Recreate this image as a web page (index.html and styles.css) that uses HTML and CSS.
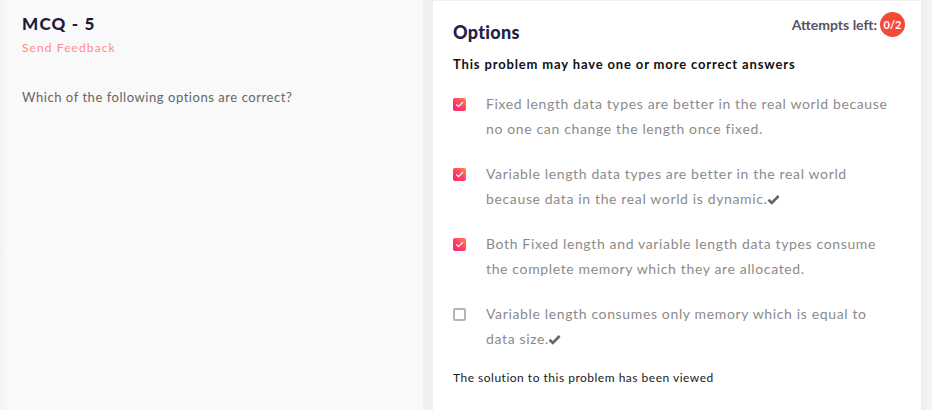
FILE: index.html
```html
<!DOCTYPE html>
<html>
<head>
<meta charset="utf-8">
<link rel="stylesheet" href="styles.css">
</head>
<body>
<div class="page">
  <section class="left">
    <h1 class="title">MCQ - 5</h1>
    <a class="feedback">Send Feedback</a>
    <p class="question">Which of the following options are correct?</p>
  </section>
  <div class="gap"></div>
  <section class="card">
    <div class="card-head">
      <h2 class="options-title">Options</h2>
      <div class="attempts">Attempts left: <span class="badge">0/2</span></div>
    </div>
    <p class="hint">This problem may have one or more correct answers</p>
    <ul class="opts">
      <li class="opt">
        <span class="cb checked"><svg viewBox="0 0 13 13" width="13" height="13"><path d="M3.6 6.8 L5.6 8.6 L9.6 4.4" fill="none" stroke="#fff" stroke-width="1.2" stroke-linecap="round" stroke-linejoin="round"/></svg></span>
        <span class="txt">Fixed length data types are better in the real world because no one can change the length once fixed.</span>
      </li>
      <li class="opt">
        <span class="cb checked"><svg viewBox="0 0 13 13" width="13" height="13"><path d="M3.6 6.8 L5.6 8.6 L9.6 4.4" fill="none" stroke="#fff" stroke-width="1.2" stroke-linecap="round" stroke-linejoin="round"/></svg></span>
        <span class="txt">Variable length data types are better in the real world because data in the real world is dynamic.<svg class="tick" viewBox="0 0 13 11" width="13" height="11"><path d="M1.5 5.8 L4.8 9 L11.6 2" fill="none" stroke="#666" stroke-width="2.6" stroke-linejoin="miter"/></svg></span>
      </li>
      <li class="opt">
        <span class="cb checked"><svg viewBox="0 0 13 13" width="13" height="13"><path d="M3.6 6.8 L5.6 8.6 L9.6 4.4" fill="none" stroke="#fff" stroke-width="1.2" stroke-linecap="round" stroke-linejoin="round"/></svg></span>
        <span class="txt">Both Fixed length and variable length data types consume the complete memory which they are allocated.</span>
      </li>
      <li class="opt">
        <span class="cb"></span>
        <span class="txt">Variable length consumes only memory which is equal to data size.<svg class="tick" viewBox="0 0 13 11" width="13" height="11"><path d="M1.5 5.8 L4.8 9 L11.6 2" fill="none" stroke="#666" stroke-width="2.6" stroke-linejoin="miter"/></svg></span>
      </li>
    </ul>
    <p class="viewed">The solution to this problem has been viewed</p>
  </section>
  <div class="edge"></div>
</div>
</body>
</html>
```
FILE: styles.css
```css
* { box-sizing: border-box; }
html, body { margin: 0; padding: 0; }
body {
  width: 932px;
  height: 410px;
  overflow: hidden;
  font-family: Lato, "Noto Sans", sans-serif;
  background: #efefef;
}
.page {
  display: flex;
  height: 410px;
}
.left {
  width: 423px;
  flex: none;
  background: linear-gradient(to right, #f2f2f2 0px, #f9f9f9 8px, #f9f9f9 100%);
  padding: 14px 22px;
}
.title {
  margin: 0;
  font-size: 17px;
  font-weight: 900;
  letter-spacing: 1.2px;
  color: #1d1b3a;
  line-height: 20px;
}
.feedback {
  display: block;
  margin-top: 7px;
  font-size: 12px;
  color: #ff8a8a;
  letter-spacing: 1.1px;
  line-height: 14px;
}
.question {
  margin: 34px 0 0;
  font-size: 13px;
  color: #666;
  letter-spacing: 0.55px;
  line-height: 16px;
}
.gap {
  width: 10px;
  flex: none;
  background: #efefef;
}
.card {
  width: 488px;
  flex: none;
  margin-top: 1px;
  background: #fff;
  padding: 12px 16px 0 20px;
}
.edge {
  flex: 1;
  background: linear-gradient(to right, #eeeeee, #f6f6f6);
}
.card-head {
  display: flex;
  justify-content: space-between;
  align-items: flex-start;
}
.options-title {
  margin: 8px 0 0;
  font-size: 18px;
  font-weight: 900;
  color: #23214a;
  letter-spacing: 0.3px;
  line-height: 22px;
}
.attempts {
  display: flex;
  align-items: center;
  gap: 3px;
  font-size: 14px;
  font-weight: 700;
  color: #55536a;
  letter-spacing: 0px;
  margin-top: -1px;
}
.badge {
  display: inline-flex;
  align-items: center;
  justify-content: center;
  width: 25px;
  height: 25px;
  border-radius: 50%;
  background: #f4483a;
  color: #fff;
  font-size: 11px;
  font-weight: 700;
  letter-spacing: 0;
}
.hint {
  margin: 13px 0 0;
  font-size: 13px;
  font-weight: 700;
  color: #111;
  letter-spacing: 0.85px;
  line-height: 16px;
}
.opts {
  list-style: none;
  margin: 19px 0 0;
  padding: 0;
}
.opt {
  display: flex;
  align-items: flex-start;
  margin-bottom: 20px;
}
.cb {
  flex: none;
  width: 13px;
  height: 13px;
  margin-top: 7px;
  margin-right: 20px;
  border-radius: 2px;
  border: 2px solid #b5b5b5;
  display: flex;
}
.cb.checked {
  border: none;
  background: linear-gradient(225deg, #ff8a3d 0%, #ff3b6b 55%, #f8236f 100%);
}
.txt {
  width: 408px;
  font-size: 14px;
  line-height: 25px;
  color: #8b8b8b;
  letter-spacing: 0.64px;
}
.tick {
  display: inline-block;
  vertical-align: -1px;
  margin-left: -1px;
}
.viewed {
  margin: 17px 0 0;
  font-size: 12px;
  color: #1a1a1a;
  letter-spacing: 0.5px;
  line-height: 14px;
}
```
